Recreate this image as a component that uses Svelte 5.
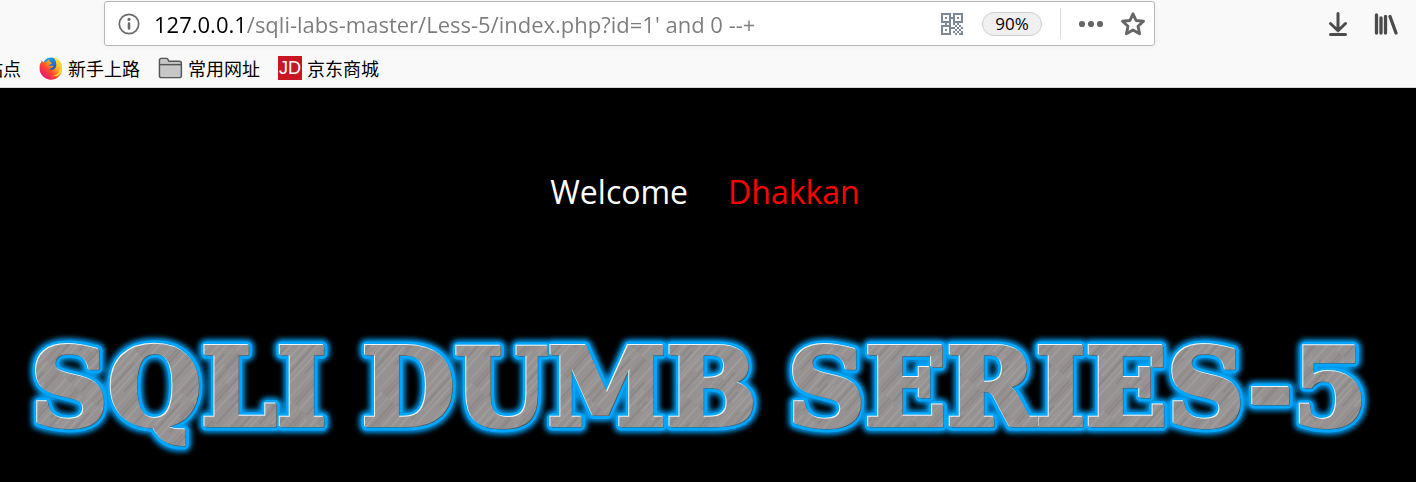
<script>
  let address = $state("127.0.0.1/sqli-labs-master/Less-5/index.php?id=1' and 0 --+");
  const words = [
    { text: 'SQLI', x: 31 },
    { text: 'DUMB', x: 362 },
    { text: 'SERIES-5', x: 788 }
  ];
  const qr = [
    '11111011111', '10001010001', '10101110101', '10001010001', '11111011111',
    '00101010100', '11111001010', '10001110101', '10101001010', '10001010101', '11111001011'
  ];
</script>

{#snippet lettering()}
  {#each words as word}
    <text x={word.x} y="106">{word.text}</text>
  {/each}
{/snippet}

<header>
  <div class="toolbar">
    <form class="urlbar" onsubmit={(e) => e.preventDefault()}>
      <button type="button" class="info" aria-label="Site information">
        <svg width="22" height="22" viewBox="0 0 22 22">
          <circle cx="11" cy="11" r="9.7" fill="none" stroke="#6b6b6b" stroke-width="1.7" />
          <circle cx="11" cy="6.4" r="1.6" fill="#6b6b6b" />
          <path d="M11 10.500v5" stroke="#6b6b6b" stroke-width="2.6" stroke-linecap="round" />
        </svg>
      </button>
      <input type="text" aria-label="Address" bind:value={address} spellcheck="false" />
      <button type="button" class="qr" aria-label="QR code">
        <svg width="22" height="22" viewBox="0 0 11 11" shape-rendering="crispEdges">
          {#each qr as row, y}
            {#each row.split('') as cell, x}
              {#if cell === '1'}<rect {x} {y} width="1" height="1" fill="#7d8795" />{/if}
            {/each}
          {/each}
        </svg>
      </button>
      <button type="button" class="zoom">90%</button>
      <span class="divider"></span>
      <button type="button" class="more" aria-label="Page actions">
        <svg width="26" height="24" viewBox="0 0 26 24" fill="#666">
          <circle cx="4" cy="12" r="3.1" /><circle cx="13" cy="12" r="3.1" /><circle cx="22" cy="12" r="3.1" />
        </svg>
      </button>
      <button type="button" aria-label="Bookmark this page">
        <svg width="26" height="26" viewBox="0 0 26 26">
          <path d="M13 2.8l3.1 6.7 7.4 .8-5.5 5 1.6 7.4-6.6-3.8-6.6 3.8 1.6-7.4-5.5-5 7.4-.8z" fill="none" stroke="#666" stroke-width="2.9" stroke-linejoin="round" />
        </svg>
      </button>
    </form>
    <div class="tools">
      <button type="button" aria-label="Downloads">
        <svg width="24" height="28" viewBox="0 0 24 28" fill="none" stroke="#4b4b4b" stroke-width="3" stroke-linecap="round" stroke-linejoin="round">
          <path d="M12 3.5v17M4.5 13.5l7.5 7.3 7.5-7.3M4.500 24.500h15" />
        </svg>
      </button>
      <button type="button" aria-label="Library">
        <svg width="24" height="24" viewBox="0 0 24 24" fill="none" stroke="#4b4b4b" stroke-width="3.300" stroke-linecap="round">
          <path d="M2.5 3v18M7 6v15M11.5 4.5V21M16 4.500l6 16.500" />
        </svg>
      </button>
    </div>
  </div>
  <nav aria-label="Bookmarks">
    <a class="cut" href="#sites">站点</a>
    <a href="#start">
      <svg width="24" height="24" viewBox="0 0 24 24">
        <defs>
          <linearGradient id="fox" x1=".9" y1=".1" x2=".15" y2=".9">
            <stop offset="0" stop-color="#fff04a" /><stop offset=".35" stop-color="#ffb01f" />
            <stop offset=".62" stop-color="#ff4b29" /><stop offset="1" stop-color="#e3127c" />
          </linearGradient>
          <linearGradient id="globe" x1="0" y1="0" x2=".5" y2="1">
            <stop offset="0" stop-color="#20b4ff" /><stop offset="1" stop-color="#173fae" />
          </linearGradient>
        </defs>
        <circle cx="12" cy="10" r="8.5" fill="url(#globe)" />
        <path d="M2.7 4.2L4.5 6.4c1-.6 2-.8 3-.7L10 3.3c.1 1.8.8 2.7 3 3.7-.6 1.2-2.7 1.4-3.2 2.7 2.3 1.1 3.6-.7 5.1.8-2 .2-2.5 2.6-5 2.4 2.5 2.1 7.5.7 7.4-4.4-.1-3-1.3-5.3-3.3-7.3 5.3 1 9.2 5.6 9.2 11.2A11.3 11.3 0 0 1 .6 12.3c0-2.7.4-4.8 1.6-6.1z" fill="url(#fox)" />
        <path d="M17 2.5c2.8 2.6 3.9 5 3.5 7.7 1.1 5.5-2.6 9.3-7.5 9.8 5.8 1.5 10-2.4 10-8 0-4.8-2.7-8-6-9.5z" fill="#ffd334" />
      </svg>
      新手上路
    </a>
    <a href="#common">
      <svg width="25" height="24" viewBox="0 0 26 24" stroke="#555" stroke-width="1.5">
        <path d="M1.5 20V4q0-2 2-2h5q1.2 0 1.8 1l1 2h11q2 0 2 2v13q0 2-2 2H3.500q-2 0-2-2z" fill="#c7c7c7" />
        <path d="M2 8.500h22" fill="none" />
      </svg>
      常用网址
    </a>
    <a href="#jd"><span class="jd">JD</span>京东商城</a>
  </nav>
</header>

<main>
  <p class="welcome">Welcome <span>Dhakkan</span></p>
  <h1>
    <svg viewBox="0 0 1416 150" aria-label="SQLI DUMB SERIES-5">
      <defs>
        <filter id="glow" x="-5%" y="-20%" width="110%" height="140%"><feGaussianBlur stdDeviation="2.5" /></filter>
        <pattern id="brushed" width="61" height="67" patternUnits="userSpaceOnUse" patternTransform="rotate(42)">
          <rect width="61" height="67" fill="#969291" />
          <g stroke-width="1">
            <path d="M3 0v42M14 18v49M28 0v30M39 24v43M51 3v38M58 0v67" stroke="#aba7a5" />
            <path d="M7 10v57M19 0v38M33 17v50M43 0v40M48 30v37" stroke="#817d7c" />
            <path d="M10 0v53M24 20v47M36 0v35M55 28v39" stroke="#a29e9d" />
            <path d="M1 45v22M17 0v20M30 30v37M46 0v27" stroke="#8a8584" />
          </g>
        </pattern>
      </defs>
      <g class="halo" filter="url(#glow)" aria-hidden="true">{@render lettering()}</g>
      <g class="rim" aria-hidden="true">{@render lettering()}</g>
      <g class="shade" transform="translate(1 1)" aria-hidden="true">{@render lettering()}</g>
      <g class="light" transform="translate(-1 -1)" aria-hidden="true">{@render lettering()}</g>
      <g class="face">{@render lettering()}</g>
    </svg>
  </h1>
</main>

<style>
  :global(body) { background: #000; font-family: "Open Sans", "Noto Sans CJK SC", sans-serif; }
  header { background: #f9f9f9; border-bottom: 1px solid #d8d8d8; overflow: hidden; }
  button { border: 0; padding: 0; background: none; display: flex; align-items: center; color: #000; font-family: inherit; }
  svg { display: block; flex: none; }
  .toolbar { display: flex; align-items: center; padding: 1px 18px 0 104px; }
  .urlbar { flex: 1; min-width: 0; box-sizing: border-box; height: 45px; display: flex; align-items: center; padding: 0 8px 0 13px; background: #fff; border: 1px solid #b8b8b8; border-radius: 3px; box-shadow: 0 1px 5px #0000000d; }
  input {
    flex: 1; min-width: 0; height: 40px; margin: 0 12px 0 14px; padding: 0; border: 0; outline: 0;
    font: 22px "Open Sans", sans-serif; color: transparent; caret-color: #000;
    background: linear-gradient(90deg, #000 93px, #7c7c7c 93px); background-clip: text; -webkit-background-clip: text;
  }
  .zoom { height: 24px; width: 60px; justify-content: center; margin-left: 19px; border: 1px solid #cfcfcf; border-radius: 12px; background: #f0f0f0; font-size: 17px; }
  .divider { width: 1px; height: 31px; margin: 0 17px 0 18px; background: #dcdcdc; }
  .more { margin-right: 16px; }
  .tools { display: flex; align-items: center; gap: 24px; margin-left: 171px; }
  nav { box-sizing: border-box; height: 41px; display: flex; align-items: center; gap: 18px; padding-top: 2px; white-space: nowrap; }
  nav a { display: flex; align-items: center; gap: 5px; color: #000; text-decoration: none; font: 18px/24px "Noto Sans CJK SC", sans-serif; }
  .cut { margin-left: -15px; }
  .jd { width: 24px; height: 24px; background: #c91623; color: #fff; font: 18px/25px "Liberation Sans", sans-serif; text-align: center; }
  main { padding-top: 80px; }
  .welcome { margin: 0; display: flex; justify-content: center; gap: 40px; padding-right: 6px; color: #fff; font: 32px/48px "Open Sans", sans-serif; }
  .welcome span { color: #f00; }
  h1 { margin: 103px 0 0; }
  h1 svg { width: 100%; overflow: visible; }
  text { font: bold 107px "DejaVu Serif", serif; }
  .halo { fill: #00a6ff; stroke: #0096e8; stroke-width: 16px; stroke-linejoin: round; }
  .rim { fill: #00a6ff; stroke: #00a6ff; stroke-width: 11px; stroke-linejoin: round; }
  .shade { fill: #4c5054; stroke: #4c5054; stroke-width: 3px; }
  .light { fill: #f2f5f7; stroke: #f2f5f7; stroke-width: 4px; }
  .face { fill: url(#brushed); stroke: url(#brushed); stroke-width: 4px; }
</style>
